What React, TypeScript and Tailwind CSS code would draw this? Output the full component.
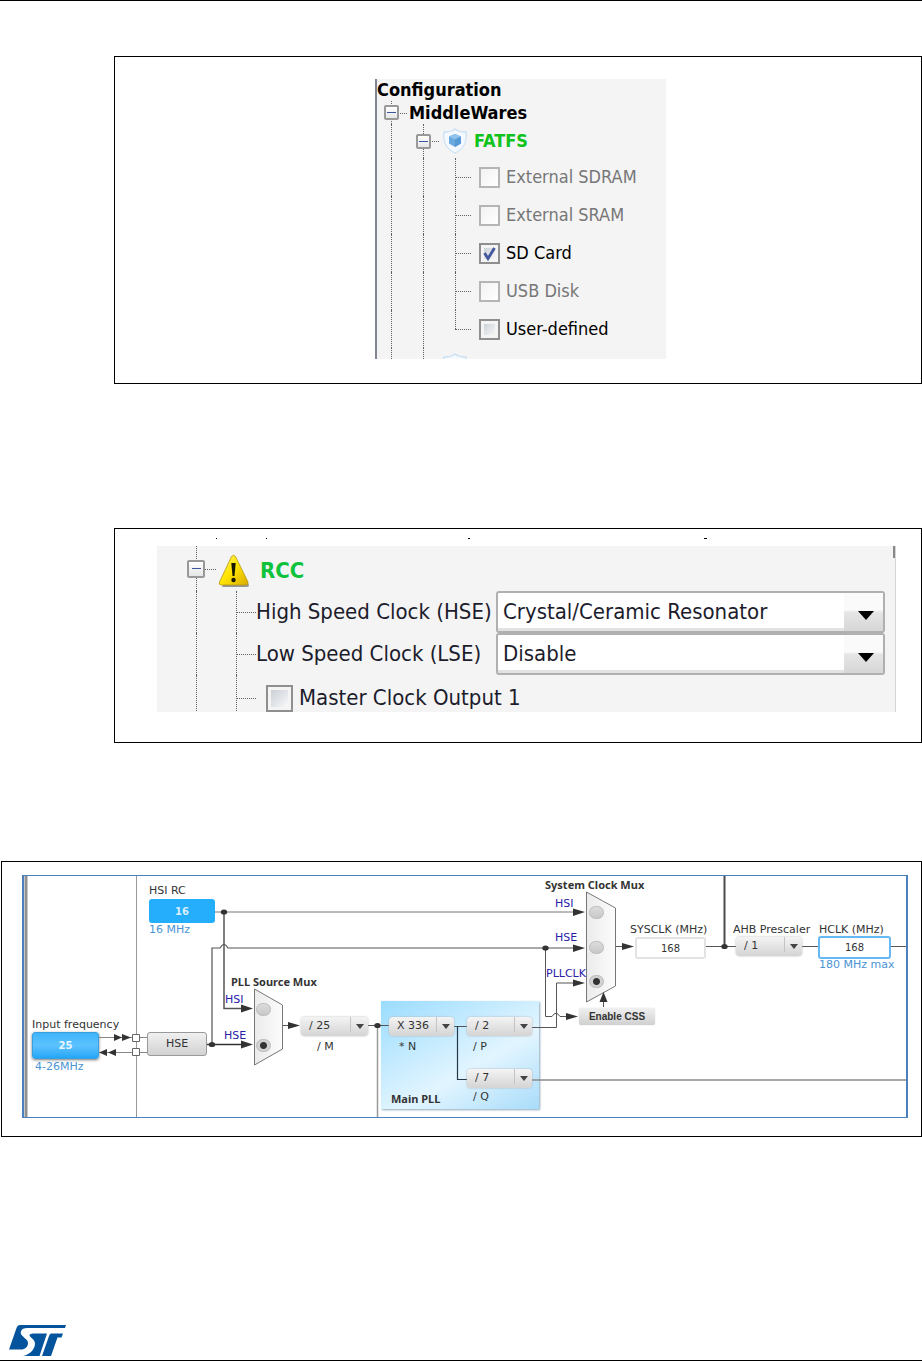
import { useId, useState } from 'react';
import type { ReactNode } from 'react';

const treeFont = "font-['DejaVu_Sans_Condensed','DejaVu_Sans',sans-serif]";

/* ---------- tree pieces ---------- */

function Toggle({ label, size }: { label: string; size: string }) {
  return (
    <button
      type="button"
      aria-label={label}
      className={`${size} relative z-10 flex shrink-0 items-center justify-center rounded-[2px] border-2 border-[#999] bg-gradient-to-b from-white to-[#e6e6e6]`}
    >
      <span className="h-px w-[9px] bg-[#3a55a0]" />
    </button>
  );
}

type GuideProps = {
  width: string;
  line?: 'full' | 'top' | 'bottom' | 'none';
  branch?: boolean;
  children?: ReactNode;
};

// One indent column: a dotted vertical line, and maybe a dotted arm to the right
function Guide({ width, line = 'full', branch = false, children }: GuideProps) {
  const lines = {
    full: 'inset-y-0',
    top: 'top-0 bottom-1/2',
    bottom: 'top-1/2 bottom-0',
    none: 'hidden',
  };
  return (
    <div className={`${width} relative flex shrink-0 items-center justify-center self-stretch`}>
      <span className={`absolute left-1/2 border-l border-dotted border-[#606060] ${lines[line]}`} />
      {branch && <span className="absolute left-1/2 right-0 top-1/2 border-t border-dotted border-[#606060]" />}
      {children}
    </div>
  );
}

function ShieldIcon() {
  return (
    <svg viewBox="0 0 26 26" className="relative z-10 h-[26px] w-[26px] shrink-0" aria-hidden="true">
      <path
        d="M13 1 C10 3.5 6 4 2 4 C1 12 2 20 13 25 C24 20 25 12 24 4 C20 4 16 3.5 13 1Z"
        fill="#f3f9fe"
        stroke="#c8dff3"
        strokeWidth="1.3"
      />
      <path d="M13 6 L19 8.500 V15.500 L13 19 L7 15.500 V8.500Z" fill="#69a9de" />
      <path d="M13 6 L19 8.500 L13 11.500 L7 8.500Z" fill="#8fc2ec" />
      <path d="M13 11.500 V19 L19 15.500 V8.500Z" fill="#559ad6" />
    </svg>
  );
}

function WarningIcon() {
  return (
    <svg viewBox="0 0 32 33" className="relative z-10 h-[33px] w-8 shrink-0" role="img" aria-label="Warning">
      <defs>
        <linearGradient id="warn" x1="0" y1="0" x2="1" y2="1">
          <stop offset="0" stopColor="#fff36a" />
          <stop offset="0.5" stopColor="#ffe400" />
          <stop offset="1" stopColor="#d9a900" />
        </linearGradient>
      </defs>
      <path d="M17 4 L31 31 Q31 33 29 33 H4Z" fill="#777" opacity="0.75" />
      <path
        d="M13.5 2.5 Q15.5 0 17.5 2.5 L30 28 Q30.5 31 28 31 H3 Q0.5 31 1.5 28Z"
        fill="url(#warn)"
        stroke="#b89a10"
        strokeWidth="0.8"
      />
      <path d="M13.3 9 H17.7 L16.5 22 H14.5Z" fill="#1a1a00" />
      <circle cx="15.5" cy="26" r="2.2" fill="#1a1a00" />
    </svg>
  );
}

type TickProps = { label: string; size: string; checked?: boolean; disabled?: boolean };

function TickBox({ label, size, checked = false, disabled = false }: TickProps) {
  const id = useId();
  const [on, setOn] = useState(checked);
  return (
    <div className="flex items-center gap-[6px]">
      <span className={`relative flex shrink-0 ${size}`}>
        <input
          id={id}
          type="checkbox"
          checked={on}
          disabled={disabled}
          onChange={() => setOn(!on)}
          className="h-full w-full appearance-none border-2 border-[#8f8f8f] bg-gradient-to-br from-[#c3c9d0] to-white bg-clip-content p-[3px] disabled:border-[#b5b5b5] disabled:from-[#f2f2f2] disabled:p-0"
        />
        {on && (
          <svg viewBox="0 0 21 21" className="pointer-events-none absolute inset-0" aria-hidden="true">
            <path d="M5.5 10 L9 15.5 L15.5 5" fill="none" stroke="#43579c" strokeWidth="2.8" />
          </svg>
        )}
      </span>
      <label htmlFor={id} className={`whitespace-nowrap ${disabled ? 'text-[#777]' : ''}`}>
        {label}
      </label>
    </div>
  );
}

/* ---------- figure 1 ---------- */

const fatfsOptions = [
  { label: 'External SDRAM', disabled: true },
  { label: 'External SRAM', disabled: true },
  { label: 'SD Card', checked: true },
  { label: 'USB Disk', disabled: true },
  { label: 'User-defined' },
];

function FatfsTree() {
  return (
    <div className={`${treeFont} w-[291px] self-start bg-[#f4f4f4] text-[18px] leading-[22px] shadow-[inset_2px_0_0_#808790]`}>
      <div className="pl-[2px] font-bold">Configuration</div>
      <div className="flex h-[23px] items-center font-bold">
        <Guide width="w-8" branch>
          <Toggle label="Collapse MiddleWares" size="size-[15px]" />
        </Guide>
        <span className="pl-[2px]">MiddleWares</span>
      </div>
      <div className="flex h-[34px] items-center font-bold">
        <Guide width="w-8" />
        <Guide width="w-8" branch>
          <Toggle label="Collapse FATFS" size="size-[15px]" />
        </Guide>
        <Guide width="w-8" line="none">
          <ShieldIcon />
        </Guide>
        <span className="pl-[3px] text-[#0fc21c]">FATFS</span>
      </div>
      {fatfsOptions.map((option, i) => (
        <div key={option.label} className="flex h-[38px] items-center">
          <Guide width="w-8" />
          <Guide width="w-8" />
          <Guide width="w-8" branch line={i === fatfsOptions.length - 1 ? 'top' : 'full'} />
          <div className="pl-2">
            <TickBox {...option} size="size-[21px]" />
          </div>
        </div>
      ))}
      <div className="flex h-[11px] items-start overflow-hidden">
        <Guide width="w-8" />
        <Guide width="w-8" />
        <div className="flex w-8 justify-center pt-[5px]">
          <ShieldIcon />
        </div>
      </div>
    </div>
  );
}

/* ---------- figure 2 ---------- */

const oscillatorModes = ['Disable', 'BYPASS Clock Source', 'Crystal/Ceramic Resonator'];

function ClockSelect({ label, value }: { label: string; value: string }) {
  const id = useId();
  return (
    <div className="flex h-[42px] items-center">
      <Guide width="w-10" />
      <Guide width="w-10" branch />
      <label htmlFor={id} className="w-[240px] shrink-0 whitespace-nowrap">
        {label}
      </label>
      <div className="relative mr-[10px] h-full flex-1">
        <select
          id={id}
          defaultValue={value}
          className="h-full w-full appearance-none rounded-[3px] border-2 border-[#b0b0b0] bg-white pl-[5px] pr-11 shadow-[inset_0_-3px_0_#e2e2e2]"
        >
          {oscillatorModes.map((mode) => (
            <option key={mode}>{mode}</option>
          ))}
        </select>
        <span className="pointer-events-none absolute inset-y-[2px] right-[2px] flex w-[39px] items-center justify-center bg-gradient-to-b from-[#fafafa] from-45% via-[#e6e6e6] via-50% to-[#d6d6d6]">
          <svg viewBox="0 0 16 9" className="mt-[7px] ml-1 h-[9px] w-4" aria-hidden="true">
            <path d="M0 0 H16 L8 9Z" />
          </svg>
        </span>
      </div>
    </div>
  );
}

function RccTree() {
  return (
    <div className={`${treeFont} relative h-[166px] overflow-hidden border-r border-[#d5d5d5] bg-[#f4f4f4] pl-[19px] text-[22px] leading-[26px] text-[#1c1c2c]`}>
      <span className="absolute right-0 top-0 h-3 w-[2px] bg-[#888]" />
      <div className="flex h-[45px] items-center font-bold">
        <Guide width="w-10" branch>
          <Toggle label="Collapse RCC" size="size-[18px]" />
        </Guide>
        <div className="w-10 pl-[2px] pt-1">
          <WarningIcon />
        </div>
        <span className="pl-1 pt-1 text-[#0fc23c]">RCC</span>
      </div>
      <ClockSelect label="High Speed Clock (HSE)" value="Crystal/Ceramic Resonator" />
      <ClockSelect label="Low Speed Clock (LSE)" value="Disable" />
      <div className="flex h-[46px] items-center">
        <Guide width="w-10" />
        <Guide width="w-10" branch />
        <div className="pl-[10px]">
          <TickBox label="Master Clock Output 1" size="size-[27px]" />
        </div>
      </div>
    </div>
  );
}

/* ---------- figure 3 ---------- */

const muxTitle = "font-['Noto_Sans',sans-serif] font-bold";

function Label({ className, children }: { className: string; children: ReactNode }) {
  return <span className={`absolute whitespace-nowrap leading-3 ${className}`}>{children}</span>;
}

function Divider({ name, value, className }: { name: string; value: string; className: string }) {
  return (
    <div className={`absolute h-[19px] ${className}`}>
      <select
        aria-label={name}
        defaultValue={value}
        className="h-full w-full appearance-none rounded-[4px] bg-gradient-to-b from-[#f4f4f4] to-[#d4d4d4] pl-2 text-[#333] shadow-[0_0_2px_#aaa]"
      >
        <option>{value}</option>
      </select>
      <span className="pointer-events-none absolute right-0 top-0 flex h-[15px] w-[18px] items-center justify-center border-l border-[#c4c4c4]">
        <svg viewBox="0 0 8 5" className="mt-[3px] h-[5px] w-2" aria-hidden="true">
          <path d="M0 0 H8 L4 5Z" fill="#444" />
        </svg>
      </span>
    </div>
  );
}

type MuxRadioProps = { group: string; name: string; className: string; checked?: boolean };

function MuxRadio({ group, name, className, checked }: MuxRadioProps) {
  return (
    <input
      type="radio"
      name={group}
      aria-label={name}
      defaultChecked={checked}
      className={`absolute h-[13px] w-[15px] appearance-none rounded-full border border-[#bbb] bg-gradient-to-b from-[#dcdcdc] to-[#c8c8c8] checked:bg-[radial-gradient(circle,#333_3px,#d2d2d2_4px)] ${className}`}
    />
  );
}

function Wires() {
  return (
    <svg viewBox="0 0 882 241" className="absolute left-0 top-0 h-[241px] w-[882px]" fill="none" stroke="#555" aria-hidden="true">
      <defs>
        <linearGradient id="mux" x1="0" y1="0" x2="1" y2="0">
          <stop offset="0" stopColor="#ebebeb" />
          <stop offset="1" stopColor="#fcfcfc" />
        </linearGradient>
      </defs>

      {/* frame rules */}
      <path d="M2 0 V241" stroke="#909090" strokeWidth="3" />
      <path d="M112.5 0 V241" stroke="#999" />
      <path d="M353.5 149 V241" stroke="#999" strokeWidth="1.5" />
      <path d="M508 204 H882" stroke="#8a8a8a" strokeWidth="1.5" />
      <path d="M700.5 0 V70" stroke="#4a4a4a" strokeWidth="2" />

      {/* HSI and HSE lines */}
      <path d="M191 36 H552" stroke="#777" />
      <path d="M200 36 V132.5 H222" strokeWidth="1.5" />
      <path d="M183 168.5 H222" stroke="#333" strokeWidth="1.5" />
      <path d="M188 168 V72 H196 Q200 65 204 72 H552" strokeWidth="1.2" />
      <path d="M521.5 72 V140.5 H528 Q532 134 536 140.5 H546" />

      {/* external crystal */}
      <path d="M75 161.5 H123 M75 176.5 H123" stroke="#888" />
      <path d="M108.5 158.5 H115.5 V165.5 H108.5Z M108.5 172.5 H115.5 V179.5 H108.5Z" fill="#fff" stroke="#666" />

      {/* PLL path */}
      <path d="M258 149.5 H268 M344 149.5 H365 M429 150.5 H443" />
      <path d="M433.5 150 V203.5 H443" stroke="#24384a" strokeWidth="1.2" />
      <path d="M508 151.5 H532.5 V107 H552" />

      {/* system clock path */}
      <path d="M591 70.5 H604 M681 70.5 H712 M778 70.5 H795 M867 70.5 H882" />
      <path d="M579.5 131 V124" />

      {/* mux bodies */}
      <path d="M230.5 113 L258.5 129 V173 L230.5 189Z" fill="url(#mux)" stroke="#777" />
      <path d="M562.5 16 L591.5 32 V110 L562.5 126Z" fill="url(#mux)" stroke="#777" />

      {/* arrow heads and junctions */}
      <g fill="#333" stroke="none">
        <path d="M217 128.5 L229 132.5 L217 136.5Z" />
        <path d="M217 164.5 L229 168.5 L217 172.5Z" />
        <path d="M264 146 L276 149.5 L264 153Z" />
        <path d="M549 32.5 L561 36 L549 40Z" />
        <path d="M549 68.5 L561 72 L549 76Z" />
        <path d="M549 103.5 L561 107 L549 110.5Z" />
        <path d="M542 137 L554 140.5 L542 144Z" />
        <path d="M598 67 L610 70.5 L598 74Z" />
        <path d="M575.5 126 L579.5 116 L583.5 126Z" />
        <path d="M90 158 L98 161.5 L90 165Z M98 158 L107 161.5 L98 165Z" />
        <path d="M83 173 L75 176.5 L83 180Z M92 173 L84 176.5 L92 180Z" />
        <ellipse cx="200" cy="36" rx="3.2" ry="2.6" />
        <ellipse cx="188" cy="168.5" rx="3.2" ry="2.6" />
        <ellipse cx="353.5" cy="149.5" rx="3.2" ry="2.6" />
        <ellipse cx="521.5" cy="72" rx="3.2" ry="2.6" />
        <ellipse cx="700.5" cy="70.5" rx="3.2" ry="2.6" />
      </g>
    </svg>
  );
}

function ClockTree() {
  return (
    <div className="relative h-[243px] overflow-hidden border-x-2 border-y border-[#4a80c0] bg-white font-['DejaVu_Sans',sans-serif] text-[11px] text-[#333]">
      <div className="absolute left-[357px] top-[125px] h-[108px] w-[158px] bg-linear-150 from-[#9adcff] via-[#e2f5ff] via-60% to-[#a8dcfa] shadow-[1px_1px_2px_#8aa8bc]" />
      <Wires />

      {/* sources */}
      <Label className="left-[125px] top-[9px]">HSI RC</Label>
      <div className="absolute left-[125px] top-[23px] flex h-6 w-[66px] items-center justify-center rounded-[3px] bg-[#25aefc] text-[10px] font-bold text-[#d8effd]">
        16
      </div>
      <Label className="left-[125px] top-[48px] text-[#4a94d4]">16 MHz</Label>
      <label htmlFor="input-frequency" className="absolute left-2 top-[143px] whitespace-nowrap leading-3">
        Input frequency
      </label>
      <input
        id="input-frequency"
        defaultValue="25"
        className="absolute left-2 top-[156px] h-[27px] w-[67px] rounded-[3px] border border-[#3a9fe0] bg-gradient-to-b from-[#3fb4fa] via-[#5cc2ff] to-[#1fa6f6] text-center text-[10px] font-bold text-[#e8f6ff] shadow-[0_1px_3px_#777]"
      />
      <Label className="left-[11px] top-[185px] text-[#4a94d4]">4-26MHz</Label>
      <button
        type="button"
        className="absolute left-[123px] top-[156px] h-6 w-[60px] rounded-[3px] border border-[#999] bg-gradient-to-b from-[#f0f0f0] to-[#d2d2d2]"
      >
        HSE
      </button>

      {/* PLL source mux */}
      <Label className={`left-[207px] top-[100px] ${muxTitle}`}>PLL Source Mux</Label>
      <Label className="left-[201px] top-[118px] text-[#2a20a8]">HSI</Label>
      <Label className="left-[200px] top-[154px] text-[#2a20a8]">HSE</Label>
      <MuxRadio group="pll-source" name="PLL source HSI" className="left-[232px] top-[127px]" />
      <MuxRadio group="pll-source" name="PLL source HSE" className="left-[232px] top-[163px]" checked />
      <Divider name="PLL M" value="/ 25" className="left-[277px] top-[141px] w-[67px]" />
      <Label className="left-[293px] top-[165px]">/ M</Label>

      {/* main PLL */}
      <Divider name="PLL N" value="X 336" className="left-[365px] top-[141px] w-[65px]" />
      <Label className="left-[375px] top-[165px]">* N</Label>
      <Divider name="PLL P" value="/ 2" className="left-[443px] top-[141px] w-[65px]" />
      <Label className="left-[449px] top-[165px]">/ P</Label>
      <Divider name="PLL Q" value="/ 7" className="left-[443px] top-[193px] w-[65px]" />
      <Label className="left-[449px] top-[215px]">/ Q</Label>
      <Label className={`left-[367px] top-[217px] ${muxTitle}`}>Main PLL</Label>

      {/* system clock mux */}
      <Label className={`left-[521px] top-[3px] ${muxTitle}`}>System Clock Mux</Label>
      <Label className="left-[531px] top-[22px] text-[#2a20a8]">HSI</Label>
      <Label className="left-[531px] top-[56px] text-[#2a20a8]">HSE</Label>
      <Label className="left-[522px] top-[92px] text-[#2a20a8]">PLLCLK</Label>
      <MuxRadio group="sysclk" name="System clock HSI" className="left-[565px] top-[30px]" />
      <MuxRadio group="sysclk" name="System clock HSE" className="left-[565px] top-[65px]" />
      <MuxRadio group="sysclk" name="System clock PLLCLK" className="left-[565px] top-[99px]" checked />
      <button
        type="button"
        className="absolute left-[555px] top-[132px] h-[17px] w-[76px] rounded-[2px] bg-gradient-to-b from-[#f0f0f0] to-[#d0d0d0] font-['Liberation_Sans',sans-serif] text-[10px] font-bold shadow-[0_0_1px_#bbb]"
      >
        Enable CSS
      </button>

      {/* outputs */}
      <label htmlFor="sysclk" className="absolute left-[606px] top-[48px] whitespace-nowrap leading-3">
        SYSCLK (MHz)
      </label>
      <input
        id="sysclk"
        defaultValue="168"
        readOnly
        className="absolute left-[611px] top-[61px] h-[22px] w-[71px] rounded-[3px] border-2 border-[#e2e2e2] bg-white text-center text-[10px]"
      />
      <Label className="left-[709px] top-[48px]">AHB Prescaler</Label>
      <Divider name="AHB Prescaler" value="/ 1" className="left-[712px] top-[61px] w-[66px]" />
      <label htmlFor="hclk" className="absolute left-[795px] top-[48px] whitespace-nowrap leading-3">
        HCLK (MHz)
      </label>
      <input
        id="hclk"
        defaultValue="168"
        className="absolute left-[794px] top-[60px] h-[23px] w-[73px] rounded-[3px] border-2 border-[#66b8f4] bg-white text-center text-[10px]"
      />
      <Label className="left-[795px] top-[83px] text-[#4a94d4]">180 MHz max</Label>
    </div>
  );
}

/* ---------- page ---------- */

function StLogo() {
  return (
    <svg viewBox="0 0 58 32" className="h-8 w-[58px]" role="img" aria-label="ST" fill="#03549c">
      <path d="M11 0 H57 L56 3 H18 C13 3 11 6 12 9 C13 12 19 14 19 18 C19 22 16 24.500 12 24.500 H0 L7.500 3 Q8.500 0 11 0Z" />
      <path d="M24 8.500 H38 L30.500 31 H14 C20 30 25.500 25 26 19 C26.300 14 20 12 20.500 10 Q21 8.500 24 8.500Z" />
      <path d="M42 8.500 H54 L52.500 12.500 H48.500 L42 31 H33 L40 11 Q40.800 8.500 42 8.500Z" />
    </svg>
  );
}

export default function App() {
  return (
    <main className="flex min-h-screen flex-col border-y border-black bg-white">
      <figure className="ml-[114px] mt-[55px] flex h-[328px] justify-center border border-black pt-[22px] pl-[5px]">
        <FatfsTree />
      </figure>

      <figure className="ml-[114px] mt-36 h-[215px] border border-black pl-[42px] pr-[25px]">
        <div className="flex h-[17px] pt-[9px]">
          <svg viewBox="0 0 739 2" className="h-[2px] w-[739px]" aria-hidden="true">
            <path d="M59 0 h1 v1 h-1z M109 0 h1 v1 h-1z M311 0 h2 v1 h-2z M547 0 h3 v1 h-3z" />
          </svg>
        </div>
        <RccTree />
      </figure>

      <figure className="ml-px mt-[118px] h-[276px] border border-black pl-5 pr-[13px] pt-[13px]">
        <ClockTree />
      </figure>

      <footer className="mt-auto pb-[3px] pl-[9px]">
        <StLogo />
      </footer>
    </main>
  );
}
